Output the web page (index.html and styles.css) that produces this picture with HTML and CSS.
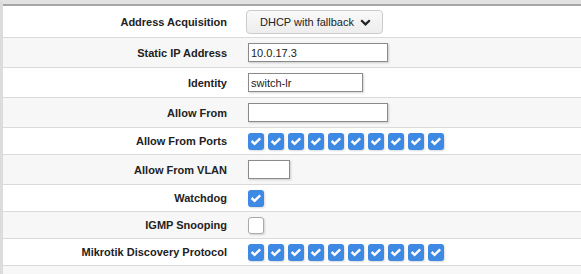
FILE: index.html
```html
<!DOCTYPE html>
<html>

<head>
    <meta charset="utf-8">
    <link rel="stylesheet" href="styles.css">
</head>

<body>
    <div class="panel">
        <div class="row row-tall">
            <span class="label">Address Acquisition</span>
            <div class="value">
                <button class="select">DHCP with fallback
                    <svg class="chev" width="11" height="7" viewBox="0 0 11 7"><polyline points="1.2,1.2 5.5,5.4 9.8,1.2" fill="none" stroke="#222" stroke-width="2.2"/></svg>
                </button>
            </div>
        </div>
        <div class="row">
            <span class="label">Static IP Address</span>
            <div class="value"><input class="text w-long" value="10.0.17.3"></div>
        </div>
        <div class="row">
            <span class="label">Identity</span>
            <div class="value"><input class="text w-mid" value="switch-lr"></div>
        </div>
        <div class="row">
            <span class="label">Allow From</span>
            <div class="value"><input class="text w-long" value=""></div>
        </div>
        <div class="row row-check">
            <span class="label">Allow From Ports</span>
            <div class="value checks" id="ports"></div>
        </div>
        <div class="row">
            <span class="label">Allow From VLAN</span>
            <div class="value"><input class="text w-short" value=""></div>
        </div>
        <div class="row row-check">
            <span class="label">Watchdog</span>
            <div class="value checks"><span class="cb on"></span></div>
        </div>
        <div class="row row-check">
            <span class="label">IGMP Snooping</span>
            <div class="value checks"><span class="cb"></span></div>
        </div>
        <div class="row row-check">
            <span class="label">Mikrotik Discovery Protocol</span>
            <div class="value checks" id="mdp"></div>
        </div>
        <div class="row row-end"></div>
    </div>

    <script>
        /* fill the port checkbox rows */
        var tick = '<svg width="16" height="16" viewBox="0 0 16 16"><polyline points="3.6,8 6.6,10.8 12.2,5.4" fill="none" stroke="#fff" stroke-width="2.4"/></svg>';

        function fillPorts(id) {
            var html = "";
            for (var i = 0; i < 10; i++) {
                html += '<span class="cb on">' + tick + '</span>';
            }
            document.getElementById(id).innerHTML = html;
        }

        fillPorts("ports");
        fillPorts("mdp");

        var single = document.querySelectorAll(".row-check .cb.on:only-child");
        for (var j = 0; j < single.length; j++) {
            single[j].innerHTML = tick;
        }
    </script>
</body>

</html>
```

FILE: styles.css
```css
body {
    margin: 0;
    font-family: 'Liberation Sans', Arial, sans-serif;
    font-size: 11px;
    color: #222;
    background: #fff;
}

.panel {
    border-top: 4px solid #e2e2e2;
    border-left: 3px solid #dcdcdc;
    box-shadow: inset 0 2px 0 #a6a6a6;
    padding-top: 2px;
    height: 268px;
    overflow: hidden;
}

.row {
    display: flex;
    align-items: center;
    height: 29px;
    border-bottom: 1px solid #dadada;
    background: #fff;
}

.row:nth-child(even) {
    background: #f7f7f7;
}

.row-tall {
    height: 31px;
}

.row-check {
    height: 26px;
}

.row-end {
    height: 20px;
    border-bottom: none;
}

.label {
    width: 224px;
    text-align: right;
    font-weight: bold;
}

.value {
    padding-left: 21px;
    display: flex;
    align-items: center;
}

.select {
    margin-left: -2px;
    width: 137px;
    height: 24px;
    border: 1px solid #cbcbcb;
    border-radius: 4px;
    background: linear-gradient(#f9f9f9, #ededed);
    font-family: 'Liberation Sans', Arial, sans-serif;
    font-size: 11px;
    color: #222;
    padding: 0 0 0 2px;
    display: flex;
    align-items: center;
    justify-content: center;
    gap: 6px;
}

.chev {
    margin-top: 1px;
}

.text {
    box-sizing: border-box;
    height: 19px;
    border: 1px solid #8a8a8a;
    border-radius: 0;
    padding: 0 2px;
    margin: 0;
    font-family: 'Liberation Sans', Arial, sans-serif;
    font-size: 11px;
    color: #222;
    background: #fff;
    box-shadow: 1px 1px 2px rgba(0, 0, 0, 0.18);
    outline: none;
}

.w-long {
    width: 140px;
}

.w-mid {
    width: 115px;
}

.w-short {
    width: 42px;
}

.checks {
    gap: 4px;
}

.cb {
    box-sizing: border-box;
    width: 16px;
    height: 17px;
    border-radius: 3px;
    border: 1px solid #a9a9a9;
    background: #fff;
    box-shadow: 1px 1px 2px rgba(0, 0, 0, 0.15);
    display: block;
}

.cb.on {
    border: none;
    background: #3d89e3;
}

.cb svg {
    display: block;
}
```
